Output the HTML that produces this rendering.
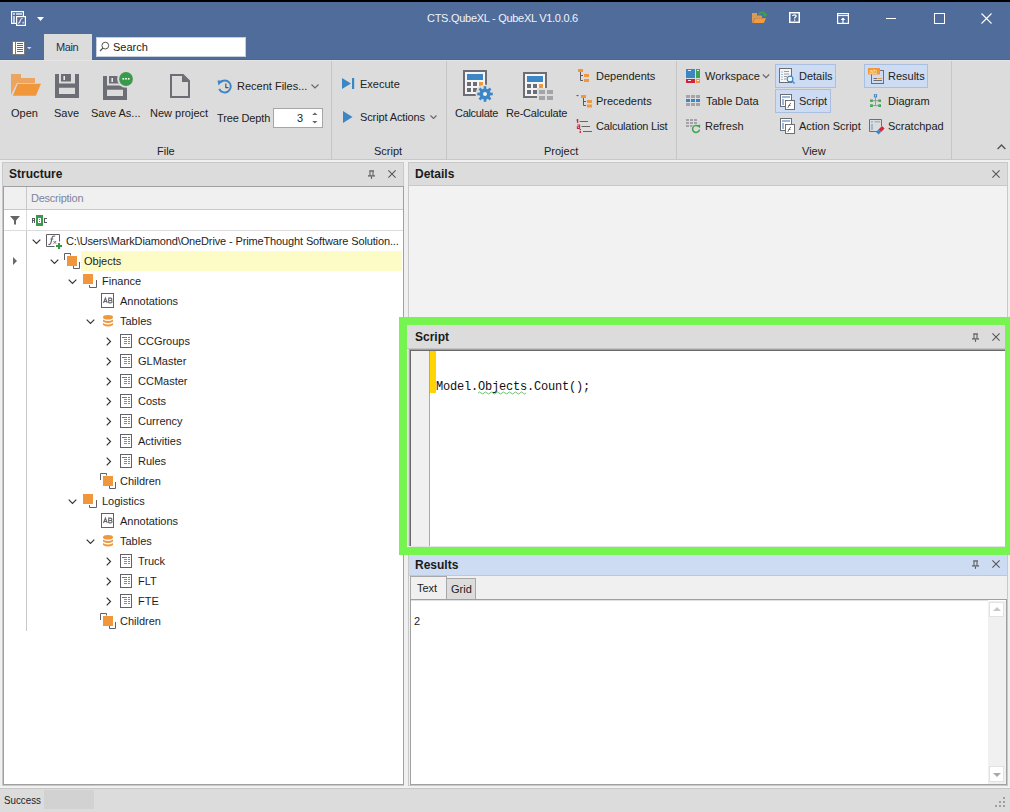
<!DOCTYPE html>
<html><head><meta charset="utf-8"><style>
html,body{margin:0;padding:0;}
body{width:1010px;height:812px;position:relative;overflow:hidden;background:#f0f0f0;font-family:"Liberation Sans",sans-serif;}
body>div{position:absolute;}
.t{white-space:nowrap;}
</style></head><body>
<div style="left:0px;top:0px;width:1010px;height:2px;background:#000"></div>
<div style="left:0px;top:2px;width:1010px;height:58px;background:#4f6c9b"></div>
<div style="left:0px;top:59px;width:1010px;height:1px;background:#49659a"></div>
<svg style="position:absolute;left:11px;top:11px;" width="16" height="16" viewBox="0 0 16 16"><rect x="0.6" y="0.6" width="11.8" height="11.8" fill="#4f6c9b" stroke="#fff" stroke-width="1.2"/><rect x="2" y="2" width="2" height="2" fill="#c0cce0"/><rect x="5" y="2" width="6" height="2" fill="#c0cce0"/><rect x="2" y="5" width="2" height="7" fill="#c0cce0"/><rect x="5.6" y="5.6" width="8.8" height="8.8" fill="#4f6c9b" stroke="#fff" stroke-width="1.2"/><path d="M7.2 12.3 C8.6 12.3 9 10.8 9.4 9.4 C9.8 8 10.3 7.4 11.6 7.5" stroke="#e8ecf4" stroke-width="1.2" fill="none"/><rect x="11.3" y="10.8" width="1.8" height="1.7" fill="#c0cce0"/></svg>
<svg style="position:absolute;left:37px;top:17px;" width="7" height="4" viewBox="0 0 7 4"><path d="M0 0 H7 L3.5 4 Z" fill="#fff"/></svg>
<div class="t" style="left:427px;top:13px;font-size:11px;line-height:11px;font-weight:400;color:#f2f4f8;font-family:'Liberation Sans',sans-serif;letter-spacing:-0.28px">CTS.QubeXL - QubeXL V1.0.0.6</div>
<svg style="position:absolute;left:751px;top:11px;" width="17" height="13" viewBox="0 0 17 13"><path d="M1 2 H6 V4.5 H11 V7 H4 L1.5 12 H1 Z" fill="#d99a55"/><path d="M4.2 7.2 H15 L12.8 12 H2 Z" fill="#f59b3a"/><path d="M8 3.5 C9 1 12.5 0.5 14 3" stroke="#3fa34d" stroke-width="1.8" fill="none"/><path d="M11.5 3 H16.5 L14 6 Z" fill="#3fa34d"/></svg>
<svg style="position:absolute;left:789px;top:12px;" width="11" height="11" viewBox="0 0 11 11"><rect x="0.75" y="0.75" width="9.5" height="9.5" fill="none" stroke="#fff" stroke-width="1.5"/><path d="M3.7 4 C3.7 2.6 7.2 2.6 7.2 4.1 C7.2 5.1 5.5 5.1 5.5 6.6" fill="none" stroke="#fff" stroke-width="1.3"/><rect x="4.9" y="7.4" width="1.3" height="1.3" fill="#fff"/></svg>
<svg style="position:absolute;left:837px;top:13px;" width="12" height="11" viewBox="0 0 12 11"><rect x="0.6" y="0.6" width="10.8" height="9.8" fill="none" stroke="#fff" stroke-width="1.2"/><path d="M1 2.6 H11" stroke="#fff" stroke-width="1"/><path d="M6 10 V5.5" stroke="#fff" stroke-width="1.2"/><path d="M3.6 7 L6 4.4 L8.4 7 Z" fill="#fff"/></svg>
<div style="left:886px;top:18px;width:10px;height:1px;background:#fff"></div>
<svg style="position:absolute;left:934px;top:13px;" width="11" height="11" viewBox="0 0 11 11"><rect x="0.5" y="0.5" width="10" height="10" fill="none" stroke="#fff" stroke-width="1"/></svg>
<svg style="position:absolute;left:981px;top:13px;" width="11" height="11" viewBox="0 0 11 11"><path d="M0.5 0.5 L10.5 10.5 M10.5 0.5 L0.5 10.5" stroke="#fff" stroke-width="1.1"/></svg>
<svg style="position:absolute;left:12px;top:41px;" width="20" height="14" viewBox="0 0 20 14"><rect x="0.5" y="0.5" width="12" height="13" fill="#fff" stroke="#7a7a7a"/><path d="M3.5 0.5 V13.5" stroke="#7a7a7a"/><path d="M5 2.5 H11 M5 4.5 H11 M5 6.5 H11 M5 8.5 H11 M5 10.5 H11" stroke="#666" stroke-width="1"/><path d="M15 6 H19.5 L17.25 8.2 Z" fill="#ddd"/></svg>
<div style="left:44px;top:34px;width:48px;height:26px;background:#dcdcdc"></div>
<div class="t" style="left:56px;top:42px;font-size:11px;line-height:11px;font-weight:400;color:#282e4c;font-family:'Liberation Sans',sans-serif;letter-spacing:-0.4px">Main</div>
<div style="left:96px;top:37px;width:150px;height:20px;background:#fff;border:1px solid #c8cfdc;box-sizing:border-box"></div>
<svg style="position:absolute;left:99px;top:41px;" width="11" height="11" viewBox="0 0 11 11"><circle cx="6.3" cy="4.6" r="3.4" fill="none" stroke="#555" stroke-width="1"/><path d="M4 7 L1 10" stroke="#555" stroke-width="1.3"/></svg>
<div class="t" style="left:113px;top:42px;font-size:11px;line-height:11px;font-weight:400;color:#222;font-family:'Liberation Sans',sans-serif;">Search</div>
<div style="left:0px;top:60px;width:1010px;height:99px;background:#dcdcdc"></div>
<div style="left:0px;top:60px;width:1010px;height:1px;background:#e4e4e4"></div>
<div style="left:0px;top:159px;width:1010px;height:1px;background:#c8c8c8"></div>
<div style="left:331px;top:61px;width:1px;height:98px;background:#c6c6c6"></div>
<div style="left:446px;top:61px;width:1px;height:98px;background:#c6c6c6"></div>
<div style="left:676px;top:61px;width:1px;height:98px;background:#c6c6c6"></div>
<div style="left:951px;top:61px;width:1px;height:98px;background:#c6c6c6"></div>
<svg style="position:absolute;left:11px;top:74px;" width="31" height="22" viewBox="0 0 31 22"><path d="M0 0 H10 V4 H24 V9 H6 L0 21 Z" fill="#eba561"/><path d="M6.7 9.8 H30 L24.9 21.7 H1.9 Z" fill="#f0973b"/></svg>
<svg style="position:absolute;left:55px;top:74px;" width="24" height="24" viewBox="0 0 24 24"><path d="M0 0 H24 V24 H0 Z M4 0 V9.4 H20 V0 Z M4 13.8 V20 H20 V13.8 Z" fill="#6d6e75" fill-rule="evenodd"/><rect x="6" y="0" width="10" height="7.5" fill="#6d6e75"/><rect x="8.4" y="2" width="1.6" height="4" fill="#e8e8e8"/></svg>
<svg style="position:absolute;left:103px;top:71px;" width="31" height="29" viewBox="0 0 31 29"><g transform="translate(0,5)"><path d="M0 0 H24 V24 H0 Z M4 0 V9.4 H20 V0 Z M4 13.8 V20 H20 V13.8 Z" fill="#6d6e75" fill-rule="evenodd"/><rect x="6" y="0" width="10" height="7.5" fill="#6d6e75"/><rect x="8.4" y="2" width="1.6" height="4" fill="#e8e8e8"/></g><circle cx="23" cy="8" r="8.8" fill="#dcdcdc"/><circle cx="23" cy="8" r="6.9" fill="#3a9a4b"/><rect x="19.5" y="7" width="1.6" height="1.6" fill="#fff"/><rect x="22.2" y="7" width="1.6" height="1.6" fill="#fff"/><rect x="24.9" y="7" width="1.6" height="1.6" fill="#fff"/></svg>
<svg style="position:absolute;left:170px;top:74px;" width="20" height="24" viewBox="0 0 20 24"><path d="M1 1 H13 L19 7 V23 H1 Z" fill="none" stroke="#6d6e75" stroke-width="2"/><path d="M12 1 L19 8 H12 Z" fill="#6d6e75"/></svg>
<div class="t" style="left:11px;top:108px;font-size:11px;line-height:11px;font-weight:400;color:#222;font-family:'Liberation Sans',sans-serif;">Open</div>
<div class="t" style="left:54px;top:108px;font-size:11px;line-height:11px;font-weight:400;color:#222;font-family:'Liberation Sans',sans-serif;">Save</div>
<div class="t" style="left:91px;top:108px;font-size:11px;line-height:11px;font-weight:400;color:#222;font-family:'Liberation Sans',sans-serif;">Save As...</div>
<div class="t" style="left:150px;top:108px;font-size:11px;line-height:11px;font-weight:400;color:#222;font-family:'Liberation Sans',sans-serif;">New project</div>
<svg style="position:absolute;left:217px;top:79px;" width="16" height="15" viewBox="0 0 16 15"><path d="M3.2 3.6 A6 6 0 1 1 2.2 9.8" fill="none" stroke="#3d86c6" stroke-width="1.9"/><path d="M0.5 1.5 L5.8 1.5 L1.5 6.5 Z" fill="#3d86c6"/><path d="M8.8 4.5 V8.6 H11.5" fill="none" stroke="#555" stroke-width="1.2"/></svg>
<div class="t" style="left:237px;top:81px;font-size:11px;line-height:11px;font-weight:400;color:#222;font-family:'Liberation Sans',sans-serif;">Recent Files...</div>
<svg style="position:absolute;left:311px;top:84px;" width="8" height="5" viewBox="0 0 8 5"><path d="M0.5 0.5 L4 4 L7.5 0.5" fill="none" stroke="#666" stroke-width="1.1"/></svg>
<div class="t" style="left:217px;top:113px;font-size:11px;line-height:11px;font-weight:400;color:#222;font-family:'Liberation Sans',sans-serif;letter-spacing:-0.15px">Tree Depth</div>
<div style="left:273px;top:108px;width:50px;height:20px;background:#fff;border:1px solid #a6a6a6;box-sizing:border-box"></div>
<div class="t" style="left:297px;top:113px;font-size:11px;line-height:11px;font-weight:400;color:#222;font-family:'Liberation Sans',sans-serif;">3</div>
<svg style="position:absolute;left:312px;top:112px;" width="6" height="12" viewBox="0 0 6 12"><path d="M0.2 3 L2.8 0.6 L5.4 3 Z M0.2 9 L2.8 11.6 L5.4 9 Z" fill="#666"/></svg>
<div class="t" style="left:157px;top:146px;font-size:11px;line-height:11px;font-weight:400;color:#222;font-family:'Liberation Sans',sans-serif;">File</div>
<svg style="position:absolute;left:342px;top:78px;" width="13" height="12" viewBox="0 0 13 12"><path d="M0 0 L9 5.5 L0 11 Z" fill="#3d86c6"/><rect x="10" y="0" width="2.2" height="11" fill="#3d86c6"/></svg>
<div class="t" style="left:360px;top:79px;font-size:11px;line-height:11px;font-weight:400;color:#222;font-family:'Liberation Sans',sans-serif;">Execute</div>
<svg style="position:absolute;left:343px;top:111px;" width="10" height="12" viewBox="0 0 10 12"><path d="M0 0 L9.5 6 L0 12 Z" fill="#3d86c6"/></svg>
<div class="t" style="left:360px;top:112px;font-size:11px;line-height:11px;font-weight:400;color:#222;font-family:'Liberation Sans',sans-serif;letter-spacing:-0.12px">Script Actions</div>
<svg style="position:absolute;left:430px;top:115px;" width="7" height="5" viewBox="0 0 7 5"><path d="M0.5 0.5 L3.5 3.5 L6.5 0.5" fill="none" stroke="#666" stroke-width="1.1"/></svg>
<div class="t" style="left:374px;top:146px;font-size:11px;line-height:11px;font-weight:400;color:#222;font-family:'Liberation Sans',sans-serif;">Script</div>
<svg style="position:absolute;left:463px;top:70px;" width="32" height="34" viewBox="0 0 32 34"><g transform="translate(0,0)"><rect x="1" y="1" width="22" height="24" fill="#f4f4f4" stroke="#6d6e75" stroke-width="2"/><rect x="4" y="4" width="16" height="6" fill="#3d86c6"/><rect x="4" y="12" width="4" height="4" fill="#6d6e75"/><rect x="4" y="18" width="4" height="4" fill="#6d6e75"/><rect x="10" y="12" width="4" height="4" fill="#6d6e75"/><rect x="10" y="18" width="4" height="4" fill="#6d6e75"/><rect x="16" y="12" width="4" height="4" fill="#f0973b"/></g><circle cx="22" cy="24" r="9.5" fill="#dcdcdc"/><g transform="translate(22,24)"><circle r="5.6" fill="#3d86c6"/><rect x="-1.3" y="-7.8" width="2.6" height="3.5" fill="#3d86c6" transform="rotate(0)"/><rect x="-1.3" y="-7.8" width="2.6" height="3.5" fill="#3d86c6" transform="rotate(45)"/><rect x="-1.3" y="-7.8" width="2.6" height="3.5" fill="#3d86c6" transform="rotate(90)"/><rect x="-1.3" y="-7.8" width="2.6" height="3.5" fill="#3d86c6" transform="rotate(135)"/><rect x="-1.3" y="-7.8" width="2.6" height="3.5" fill="#3d86c6" transform="rotate(180)"/><rect x="-1.3" y="-7.8" width="2.6" height="3.5" fill="#3d86c6" transform="rotate(225)"/><rect x="-1.3" y="-7.8" width="2.6" height="3.5" fill="#3d86c6" transform="rotate(270)"/><rect x="-1.3" y="-7.8" width="2.6" height="3.5" fill="#3d86c6" transform="rotate(315)"/><circle r="2" fill="#f2f2f2"/></g></svg>
<div class="t" style="left:455px;top:108px;font-size:11px;line-height:11px;font-weight:400;color:#222;font-family:'Liberation Sans',sans-serif;letter-spacing:-0.3px">Calculate</div>
<svg style="position:absolute;left:523px;top:72px;" width="32" height="30" viewBox="0 0 32 30"><rect x="1" y="1" width="22" height="24" fill="#f4f4f4" stroke="#6d6e75" stroke-width="2"/><rect x="4" y="4" width="16" height="6" fill="#3d86c6"/><rect x="4" y="12" width="4" height="4" fill="#6d6e75"/><rect x="4" y="18" width="4" height="4" fill="#6d6e75"/><rect x="10" y="12" width="4" height="4" fill="#6d6e75"/><rect x="10" y="18" width="4" height="4" fill="#6d6e75"/><rect x="16" y="12" width="4" height="4" fill="#f0973b"/><rect x="14" y="16" width="17" height="14" fill="#dcdcdc"/><rect x="16" y="18" width="6" height="4" fill="#a3a3a8"/><rect x="16" y="24" width="6" height="4" fill="#a3a3a8"/><rect x="24" y="18" width="6" height="4" fill="#a3a3a8"/><rect x="24" y="24" width="6" height="4" fill="#a3a3a8"/></svg>
<div class="t" style="left:506px;top:108px;font-size:11px;line-height:11px;font-weight:400;color:#222;font-family:'Liberation Sans',sans-serif;letter-spacing:-0.2px">Re-Calculate</div>
<svg style="position:absolute;left:577px;top:68px;" width="13" height="15" viewBox="0 0 13 15"><rect x="1" y="1" width="5" height="3" fill="#f0973b"/><path d="M3.5 4 V12.5 H6 M3.5 7.5 H6" stroke="#5a5a60" stroke-width="1" fill="none"/><rect x="7" y="6" width="5" height="3" fill="#f0973b"/><rect x="7" y="11" width="5" height="3" fill="#f0973b"/></svg>
<div class="t" style="left:596px;top:71px;font-size:11px;line-height:11px;font-weight:400;color:#222;font-family:'Liberation Sans',sans-serif;">Dependents</div>
<svg style="position:absolute;left:575px;top:94px;" width="18" height="14" viewBox="0 0 18 14"><path d="M1 1 H4 L2.5 2.5 Z" fill="#5a5a60"/><rect x="6" y="1" width="5" height="3" fill="#f0973b"/><path d="M8.5 4 V11.5 H11 M8.5 7.5 H11" stroke="#5a5a60" stroke-width="1" fill="none"/><rect x="12" y="6" width="5" height="3" fill="#f0973b"/><rect x="12" y="10.5" width="5" height="3" fill="#f0973b"/></svg>
<div class="t" style="left:596px;top:96px;font-size:11px;line-height:11px;font-weight:400;color:#222;font-family:'Liberation Sans',sans-serif;">Precedents</div>
<svg style="position:absolute;left:576px;top:119px;" width="17" height="15" viewBox="0 0 17 15"><path d="M0.6 1.5 L1.6 0.6 V4" stroke="#d0243c" stroke-width="1.3" fill="none"/><path d="M3.5 2.5 H12" stroke="#666" stroke-width="1"/><path d="M1.3 6 H3.6 V9.5 H1.4 V7.8 H3.6" stroke="#d0243c" stroke-width="1.1" fill="none"/><path d="M5.5 7.5 H14" stroke="#666" stroke-width="1"/><path d="M4.3 10 V10.9 M4.3 11.8 V14" stroke="#d0243c" stroke-width="1.3"/><path d="M7 12.5 H16" stroke="#666" stroke-width="1"/></svg>
<div class="t" style="left:596px;top:121px;font-size:11px;line-height:11px;font-weight:400;color:#222;font-family:'Liberation Sans',sans-serif;letter-spacing:-0.2px">Calculation List</div>
<div class="t" style="left:544px;top:146px;font-size:11px;line-height:11px;font-weight:400;color:#222;font-family:'Liberation Sans',sans-serif;">Project</div>
<svg style="position:absolute;left:686px;top:69px;" width="15" height="15" viewBox="0 0 15 15"><rect x="0" y="0" width="9" height="9" fill="#3d86c6"/><rect x="10" y="0" width="4" height="9" fill="#3fa34d"/><rect x="0" y="10" width="9" height="4" fill="#d0243c"/><rect x="10" y="10" width="4" height="4" fill="#f0973b"/><rect x="2" y="1" width="3" height="1" fill="#fff" opacity="0.85"/><rect x="11" y="1" width="2" height="1" fill="#fff" opacity="0.85"/><rect x="2" y="11" width="3" height="1" fill="#fff" opacity="0.85"/><rect x="11" y="11" width="2" height="1" fill="#fff" opacity="0.85"/></svg>
<div class="t" style="left:705px;top:71px;font-size:11px;line-height:11px;font-weight:400;color:#222;font-family:'Liberation Sans',sans-serif;">Workspace</div>
<svg style="position:absolute;left:762px;top:74px;" width="8" height="5" viewBox="0 0 8 5"><path d="M0.8 0.5 L4 3.7 L7.2 0.5" fill="none" stroke="#666" stroke-width="1.1"/></svg>
<svg style="position:absolute;left:686px;top:95px;" width="15" height="12" viewBox="0 0 15 12"><rect x="0" y="0" width="4" height="3" fill="#a3a3a8"/><rect x="0" y="4" width="4" height="3" fill="#3d86c6"/><rect x="0" y="8" width="4" height="3" fill="#a3a3a8"/><rect x="5" y="0" width="4" height="3" fill="#a3a3a8"/><rect x="5" y="4" width="4" height="3" fill="#3d86c6"/><rect x="5" y="8" width="4" height="3" fill="#a3a3a8"/><rect x="10" y="0" width="4" height="3" fill="#a3a3a8"/><rect x="10" y="4" width="4" height="3" fill="#3d86c6"/><rect x="10" y="8" width="4" height="3" fill="#a3a3a8"/></svg>
<div class="t" style="left:706px;top:96px;font-size:11px;line-height:11px;font-weight:400;color:#222;font-family:'Liberation Sans',sans-serif;">Table Data</div>
<svg style="position:absolute;left:686px;top:119px;" width="16" height="16" viewBox="0 0 16 16"><rect x="0" y="0" width="3" height="2" fill="#a3a3a8"/><rect x="0" y="3" width="3" height="2" fill="#a3a3a8"/><rect x="0" y="6" width="3" height="2" fill="#a3a3a8"/><rect x="4" y="0" width="3" height="2" fill="#a3a3a8"/><rect x="4" y="3" width="3" height="2" fill="#a3a3a8"/><rect x="4" y="6" width="3" height="2" fill="#a3a3a8"/><rect x="8" y="0" width="3" height="2" fill="#a3a3a8"/><rect x="8" y="3" width="3" height="2" fill="#a3a3a8"/><rect x="8" y="6" width="3" height="2" fill="#a3a3a8"/><circle cx="10" cy="10" r="4.8" fill="#dcdcdc"/><path d="M13.5 10.6 A3.5 3.5 0 1 1 11.9 7" fill="none" stroke="#3fa34d" stroke-width="1.5"/><path d="M10.6 6.6 L14.2 5.6 L14 9.2 Z" fill="#3fa34d"/></svg>
<div class="t" style="left:705px;top:121px;font-size:11px;line-height:11px;font-weight:400;color:#222;font-family:'Liberation Sans',sans-serif;">Refresh</div>
<div style="left:775px;top:64px;width:61px;height:24px;background:#cddcf2;border:1px solid #a9bfdf;box-sizing:border-box"></div>
<div style="left:775px;top:89px;width:56px;height:24px;background:#cddcf2;border:1px solid #a9bfdf;box-sizing:border-box"></div>
<div style="left:864px;top:64px;width:64px;height:24px;background:#cddcf2;border:1px solid #a9bfdf;box-sizing:border-box"></div>
<svg style="position:absolute;left:779px;top:68px;" width="17" height="17" viewBox="0 0 17 17"><rect x="0.5" y="0.5" width="12" height="14" fill="#f6f6f6" stroke="#6d6e75"/><path d="M3 3.5 V4.5 M3 6 V7 M3 8.5 V9.5 M3 11 V12" stroke="#3d86c6" stroke-width="1"/><path d="M5 3.5 H10 M5 6 H10 M5 8.5 H8 M5 11 H7" stroke="#9a9aa0" stroke-width="1"/><circle cx="11" cy="11" r="2.9" fill="#f6f6f6" stroke="#3d86c6" stroke-width="1.2"/><path d="M13 13 L15.5 15.5" stroke="#3d86c6" stroke-width="1.4"/></svg>
<div class="t" style="left:799px;top:71px;font-size:11px;line-height:11px;font-weight:400;color:#222;font-family:'Liberation Sans',sans-serif;">Details</div>
<svg style="position:absolute;left:780px;top:94px;" width="16" height="17" viewBox="0 0 16 17"><rect x="0.5" y="0.5" width="11" height="12" fill="#fff" stroke="#6d6e75"/><rect x="2" y="2" width="8" height="2" fill="#9ab8dc"/><rect x="2" y="5" width="2" height="6" fill="#9ab8dc"/><rect x="5.5" y="6.5" width="9" height="9" fill="#fff" stroke="#6d6e75"/><path d="M7.5 14 C8.5 14 9.5 9 11 9 M8.5 11.5 H10.5" stroke="#6d6e75" stroke-width="1" fill="none"/></svg>
<div class="t" style="left:799px;top:96px;font-size:11px;line-height:11px;font-weight:400;color:#222;font-family:'Liberation Sans',sans-serif;">Script</div>
<svg style="position:absolute;left:780px;top:118px;" width="16" height="17" viewBox="0 0 16 17"><rect x="0.5" y="0.5" width="11" height="12" fill="#fff" stroke="#6d6e75"/><rect x="2" y="2" width="8" height="2" fill="#9ab8dc"/><rect x="2" y="5" width="2" height="6" fill="#9ab8dc"/><rect x="5.5" y="6.5" width="9" height="9" fill="#fff" stroke="#6d6e75"/><path d="M7.5 14 C8.5 14 9.5 9 11 9 M8.5 11.5 H10.5" stroke="#6d6e75" stroke-width="1" fill="none"/></svg>
<div class="t" style="left:799px;top:121px;font-size:11px;line-height:11px;font-weight:400;color:#222;font-family:'Liberation Sans',sans-serif;">Action Script</div>
<svg style="position:absolute;left:868px;top:68px;" width="17" height="17" viewBox="0 0 17 17"><rect x="3.5" y="2.5" width="12" height="13" fill="none" stroke="#6d6e75"/><path d="M5.5 10.5 H9" stroke="#6d6e75"/><path d="M9.5 10.5 H14" stroke="#f0973b"/><path d="M5.5 12.5 H14" stroke="#6d6e75"/><rect x="0" y="0" width="12" height="6.5" fill="#f0973b"/><text x="1.3" y="5.6" font-size="7" fill="#fbe3c8" font-family="Liberation Sans">ab</text></svg>
<div class="t" style="left:888px;top:71px;font-size:11px;line-height:11px;font-weight:400;color:#222;font-family:'Liberation Sans',sans-serif;">Results</div>
<svg style="position:absolute;left:869px;top:93px;" width="14" height="15" viewBox="0 0 14 15"><rect x="5.4" y="1.7" width="2.2" height="2.2" fill="none" stroke="#3d86c6"/><path d="M6.5 4 V13 M3.3 7.7 H9.8 M3.3 12.6 H9.8" stroke="#9a9a9a" stroke-width="1"/><rect x="1.6" y="7" width="1.7" height="1.4" fill="none" stroke="#3fa34d"/><rect x="9.8" y="7" width="1.7" height="1.4" fill="none" stroke="#3fa34d"/><rect x="1.6" y="11.8" width="1.7" height="1.7" fill="none" stroke="#3fa34d"/><rect x="9.8" y="11.8" width="1.7" height="1.7" fill="none" stroke="#3fa34d"/></svg>
<div class="t" style="left:888px;top:96px;font-size:11px;line-height:11px;font-weight:400;color:#222;font-family:'Liberation Sans',sans-serif;">Diagram</div>
<svg style="position:absolute;left:869px;top:119px;" width="16" height="16" viewBox="0 0 16 16"><path d="M8 12.5 H0.5 V0.5 H12.5 V7" fill="none" stroke="#6d6e75"/><rect x="2" y="2" width="2" height="1.5" fill="#9ab8dc"/><rect x="5.5" y="2" width="5.5" height="1.5" fill="#9ab8dc"/><rect x="2" y="5" width="2" height="6" fill="#9ab8dc"/><path d="M13.03 7.03 L15.57 9.57 L12.07 13.07 L9.53 10.53 Z" fill="#d0243c"/><path d="M9.53 10.53 L12.07 13.07 L9.57 15.57 L7.03 13.03 Z" fill="#3d86c6"/></svg>
<div class="t" style="left:888px;top:121px;font-size:11px;line-height:11px;font-weight:400;color:#222;font-family:'Liberation Sans',sans-serif;">Scratchpad</div>
<div class="t" style="left:802px;top:146px;font-size:11px;line-height:11px;font-weight:400;color:#222;font-family:'Liberation Sans',sans-serif;">View</div>
<svg style="position:absolute;left:997px;top:144px;" width="9" height="6" viewBox="0 0 9 6"><path d="M0.6 5 L4.5 1.1 L8.4 5" fill="none" stroke="#555" stroke-width="1.4"/></svg>
<div style="left:0px;top:160px;width:1010px;height:628px;background:#f0f0f0"></div>
<div style="left:2px;top:162px;width:402px;height:624px;background:#dcdcdc;border:1px solid #c8c8c8;box-sizing:border-box"></div>
<div class="t" style="left:9px;top:168px;font-size:12px;line-height:12px;font-weight:700;color:#1a1a1a;font-family:'Liberation Sans',sans-serif;">Structure</div>
<svg style="position:absolute;left:368px;top:170px;" width="7" height="10" viewBox="0 0 7 10"><path d="M1.2 1 H6" stroke="#555" stroke-width="1.3"/><path d="M2 1.5 V5.5 M5 1.5 V5.5" stroke="#555" stroke-width="1"/><path d="M0 5.9 H7" stroke="#555" stroke-width="1.2"/><path d="M3.5 6.5 V8.8" stroke="#555" stroke-width="1.1"/></svg>
<svg style="position:absolute;left:388px;top:170px;" width="8" height="8" viewBox="0 0 8 8"><path d="M0.4 0.4 L7.6 7.6 M7.6 0.4 L0.4 7.6" stroke="#555" stroke-width="1.05"/></svg>
<div style="left:3px;top:186px;width:401px;height:599px;background:#fff;border:1px solid #a0a0a0;box-sizing:border-box"></div>
<div style="left:4px;top:187px;width:399px;height:22px;background:#f0f0f0"></div>
<div style="left:4px;top:209px;width:399px;height:1px;background:#c8c8c8"></div>
<div style="left:26px;top:187px;width:1px;height:22px;background:#c8c8c8"></div>
<div style="left:26px;top:210px;width:1px;height:20px;background:#dcdcdc"></div>
<div style="left:4px;top:230px;width:399px;height:1px;background:#dcdcdc"></div>
<div class="t" style="left:31px;top:193px;font-size:11px;line-height:11px;font-weight:400;color:#80849a;font-family:'Liberation Sans',sans-serif;letter-spacing:-0.25px">Description</div>
<svg style="position:absolute;left:10px;top:216px;" width="10" height="9" viewBox="0 0 10 9"><path d="M0 0 H10 L6 4.5 V8.5 H4 V4.5 Z" fill="#666"/></svg>
<svg style="position:absolute;left:31px;top:214px;" width="18" height="13" viewBox="0 0 18 13"><g shape-rendering="crispEdges"><rect x="1" y="4" width="3" height="1" fill="#5a5a64"/><rect x="1" y="4" width="1" height="5" fill="#5a5a64"/><rect x="3" y="4" width="1" height="5" fill="#5a5a64"/><rect x="1" y="6" width="3" height="1" fill="#5a5a64"/><rect x="5" y="1" width="7" height="11" fill="#3a9a4b"/><rect x="7" y="4" width="3" height="5" fill="#fff"/><rect x="8" y="5" width="1" height="1" fill="#3a9a4b"/><rect x="8" y="7" width="1" height="1" fill="#3a9a4b"/><rect x="13" y="4" width="3" height="1" fill="#5a5a64"/><rect x="13" y="4" width="1" height="5" fill="#5a5a64"/><rect x="13" y="8" width="3" height="1" fill="#5a5a64"/></g></svg>
<div style="left:26px;top:231px;width:1px;height:400px;background:#c8c8c8"></div>
<svg style="position:absolute;left:32px;top:239px;" width="9" height="6" viewBox="0 0 9 6"><path d="M0.7 0.7 L4.5 4.5 L8.3 0.7" fill="none" stroke="#333" stroke-width="1.2"/></svg>
<svg style="position:absolute;left:46px;top:234px;" width="17" height="16" viewBox="0 0 17 16"><path d="M8.5 12.5 H0.5 V0.5 H13.5 V7.5" stroke="#606068" fill="none"/><path d="M2.4 10.3 C3.5 11 4.6 10.4 5.1 8.2 L6 4 C6.4 2.3 7.5 1.7 9.2 2.2" stroke="#606068" stroke-width="1.15" fill="none"/><path d="M4.3 5 H7.3" stroke="#606068" stroke-width="0.9"/><path d="M7.5 7 L10.2 9.8 M10.2 7 L7.5 9.8" stroke="#606068" stroke-width="0.9"/><path d="M13 9 V15 M10 12 H16" stroke="#2f9a3e" stroke-width="2"/></svg>
<div class="t" style="left:66px;top:236px;font-size:11px;line-height:11px;font-weight:400;color:#1e1e1e;font-family:'Liberation Sans',sans-serif;letter-spacing:-0.13px">C:\Users\MarkDiamond\OneDrive - PrimeThought Software Solution...</div>
<div style="left:81px;top:251px;width:321px;height:20px;background:#fdfbc6"></div>
<svg style="position:absolute;left:13px;top:257px;" width="5" height="8" viewBox="0 0 5 8"><path d="M0 0 L4 4 L0 8 Z" fill="#6a6a6a"/></svg>
<svg style="position:absolute;left:50px;top:259px;" width="9" height="6" viewBox="0 0 9 6"><path d="M0.7 0.7 L4.5 4.5 L8.3 0.7" fill="none" stroke="#333" stroke-width="1.2"/></svg>
<svg style="position:absolute;left:64px;top:253px;" width="17" height="17" viewBox="0 0 17 17"><path d="M0.5 7 V0.5 H6.5 V2.5" fill="none" stroke="#5f6068"/><rect x="3" y="3" width="10" height="10" fill="#f0973b"/><path d="M9.5 13 V15.5 H15.5 V9" fill="none" stroke="#5f6068"/></svg>
<div class="t" style="left:84px;top:256px;font-size:11px;line-height:11px;font-weight:400;color:#1e1e1e;font-family:'Liberation Sans',sans-serif;">Objects</div>
<svg style="position:absolute;left:68px;top:279px;" width="9" height="6" viewBox="0 0 9 6"><path d="M0.7 0.7 L4.5 4.5 L8.3 0.7" fill="none" stroke="#333" stroke-width="1.2"/></svg>
<svg style="position:absolute;left:82px;top:273px;" width="17" height="17" viewBox="0 0 17 17"><rect x="1" y="1" width="10" height="10" fill="#f0973b"/><path d="M7.5 12 V14.5 H14.5 V7" fill="none" stroke="#5f6068"/></svg>
<div class="t" style="left:102px;top:276px;font-size:11px;line-height:11px;font-weight:400;color:#1e1e1e;font-family:'Liberation Sans',sans-serif;">Finance</div>
<svg style="position:absolute;left:101px;top:293px;" width="14" height="16" viewBox="0 0 14 16"><rect x="0.5" y="0.5" width="12" height="14" fill="#fff" stroke="#606068"/><path d="M2.5 10 L4.4 5 L6.3 10 M3.2 8.5 H5.6" stroke="#66666c" stroke-width="1.1" fill="none"/><path d="M7.7 10 V5.1 H9.6 Q10.9 5.1 10.9 6.3 Q10.9 7.5 9.6 7.5 H7.7 M9.6 7.5 Q11.1 7.5 11.1 8.7 Q11.1 9.9 9.6 9.9 H7.7" stroke="#66666c" stroke-width="1.1" fill="none"/></svg>
<div class="t" style="left:120px;top:296px;font-size:11px;line-height:11px;font-weight:400;color:#1e1e1e;font-family:'Liberation Sans',sans-serif;">Annotations</div>
<svg style="position:absolute;left:86px;top:319px;" width="9" height="6" viewBox="0 0 9 6"><path d="M0.7 0.7 L4.5 4.5 L8.3 0.7" fill="none" stroke="#333" stroke-width="1.2"/></svg>
<svg style="position:absolute;left:103px;top:315px;" width="10" height="13" viewBox="0 0 10 13"><ellipse cx="5" cy="2.3" rx="5" ry="2.3" fill="#f0973b"/><path d="M0 4.6 Q5 7.6 10 4.6 V6.6 Q5 9.6 0 6.6Z M0 8.1 Q5 11.1 10 8.1 V10 Q5 13 0 10Z" fill="#f0973b"/></svg>
<div class="t" style="left:120px;top:316px;font-size:11px;line-height:11px;font-weight:400;color:#1e1e1e;font-family:'Liberation Sans',sans-serif;">Tables</div>
<svg style="position:absolute;left:106px;top:337px;" width="6" height="9" viewBox="0 0 6 9"><path d="M0.7 0.7 L4.5 4.5 L0.7 8.3" fill="none" stroke="#333" stroke-width="1.2"/></svg>
<svg style="position:absolute;left:120px;top:334px;" width="13" height="15" viewBox="0 0 13 15"><rect x="0.5" y="0.5" width="11" height="13" fill="#fff" stroke="#5f6068"/><path d="M2 3.5 H7 M8 3.5 H10" stroke="#3d86c6"/><path d="M4 5.5 H7 M8 5.5 H10 M4 7.5 H7 M8 7.5 H10 M4 9.5 H7 M8 9.5 H10" stroke="#8a8a90"/></svg>
<div class="t" style="left:138px;top:336px;font-size:11px;line-height:11px;font-weight:400;color:#1e1e1e;font-family:'Liberation Sans',sans-serif;">CCGroups</div>
<svg style="position:absolute;left:106px;top:357px;" width="6" height="9" viewBox="0 0 6 9"><path d="M0.7 0.7 L4.5 4.5 L0.7 8.3" fill="none" stroke="#333" stroke-width="1.2"/></svg>
<svg style="position:absolute;left:120px;top:354px;" width="13" height="15" viewBox="0 0 13 15"><rect x="0.5" y="0.5" width="11" height="13" fill="#fff" stroke="#5f6068"/><path d="M2 3.5 H7 M8 3.5 H10" stroke="#3d86c6"/><path d="M4 5.5 H7 M8 5.5 H10 M4 7.5 H7 M8 7.5 H10 M4 9.5 H7 M8 9.5 H10" stroke="#8a8a90"/></svg>
<div class="t" style="left:138px;top:356px;font-size:11px;line-height:11px;font-weight:400;color:#1e1e1e;font-family:'Liberation Sans',sans-serif;">GLMaster</div>
<svg style="position:absolute;left:106px;top:377px;" width="6" height="9" viewBox="0 0 6 9"><path d="M0.7 0.7 L4.5 4.5 L0.7 8.3" fill="none" stroke="#333" stroke-width="1.2"/></svg>
<svg style="position:absolute;left:120px;top:374px;" width="13" height="15" viewBox="0 0 13 15"><rect x="0.5" y="0.5" width="11" height="13" fill="#fff" stroke="#5f6068"/><path d="M2 3.5 H7 M8 3.5 H10" stroke="#3d86c6"/><path d="M4 5.5 H7 M8 5.5 H10 M4 7.5 H7 M8 7.5 H10 M4 9.5 H7 M8 9.5 H10" stroke="#8a8a90"/></svg>
<div class="t" style="left:138px;top:376px;font-size:11px;line-height:11px;font-weight:400;color:#1e1e1e;font-family:'Liberation Sans',sans-serif;">CCMaster</div>
<svg style="position:absolute;left:106px;top:397px;" width="6" height="9" viewBox="0 0 6 9"><path d="M0.7 0.7 L4.5 4.5 L0.7 8.3" fill="none" stroke="#333" stroke-width="1.2"/></svg>
<svg style="position:absolute;left:120px;top:394px;" width="13" height="15" viewBox="0 0 13 15"><rect x="0.5" y="0.5" width="11" height="13" fill="#fff" stroke="#5f6068"/><path d="M2 3.5 H7 M8 3.5 H10" stroke="#3d86c6"/><path d="M4 5.5 H7 M8 5.5 H10 M4 7.5 H7 M8 7.5 H10 M4 9.5 H7 M8 9.5 H10" stroke="#8a8a90"/></svg>
<div class="t" style="left:138px;top:396px;font-size:11px;line-height:11px;font-weight:400;color:#1e1e1e;font-family:'Liberation Sans',sans-serif;">Costs</div>
<svg style="position:absolute;left:106px;top:417px;" width="6" height="9" viewBox="0 0 6 9"><path d="M0.7 0.7 L4.5 4.5 L0.7 8.3" fill="none" stroke="#333" stroke-width="1.2"/></svg>
<svg style="position:absolute;left:120px;top:414px;" width="13" height="15" viewBox="0 0 13 15"><rect x="0.5" y="0.5" width="11" height="13" fill="#fff" stroke="#5f6068"/><path d="M2 3.5 H7 M8 3.5 H10" stroke="#3d86c6"/><path d="M4 5.5 H7 M8 5.5 H10 M4 7.5 H7 M8 7.5 H10 M4 9.5 H7 M8 9.5 H10" stroke="#8a8a90"/></svg>
<div class="t" style="left:138px;top:416px;font-size:11px;line-height:11px;font-weight:400;color:#1e1e1e;font-family:'Liberation Sans',sans-serif;">Currency</div>
<svg style="position:absolute;left:106px;top:437px;" width="6" height="9" viewBox="0 0 6 9"><path d="M0.7 0.7 L4.5 4.5 L0.7 8.3" fill="none" stroke="#333" stroke-width="1.2"/></svg>
<svg style="position:absolute;left:120px;top:434px;" width="13" height="15" viewBox="0 0 13 15"><rect x="0.5" y="0.5" width="11" height="13" fill="#fff" stroke="#5f6068"/><path d="M2 3.5 H7 M8 3.5 H10" stroke="#3d86c6"/><path d="M4 5.5 H7 M8 5.5 H10 M4 7.5 H7 M8 7.5 H10 M4 9.5 H7 M8 9.5 H10" stroke="#8a8a90"/></svg>
<div class="t" style="left:138px;top:436px;font-size:11px;line-height:11px;font-weight:400;color:#1e1e1e;font-family:'Liberation Sans',sans-serif;">Activities</div>
<svg style="position:absolute;left:106px;top:457px;" width="6" height="9" viewBox="0 0 6 9"><path d="M0.7 0.7 L4.5 4.5 L0.7 8.3" fill="none" stroke="#333" stroke-width="1.2"/></svg>
<svg style="position:absolute;left:120px;top:454px;" width="13" height="15" viewBox="0 0 13 15"><rect x="0.5" y="0.5" width="11" height="13" fill="#fff" stroke="#5f6068"/><path d="M2 3.5 H7 M8 3.5 H10" stroke="#3d86c6"/><path d="M4 5.5 H7 M8 5.5 H10 M4 7.5 H7 M8 7.5 H10 M4 9.5 H7 M8 9.5 H10" stroke="#8a8a90"/></svg>
<div class="t" style="left:138px;top:456px;font-size:11px;line-height:11px;font-weight:400;color:#1e1e1e;font-family:'Liberation Sans',sans-serif;">Rules</div>
<svg style="position:absolute;left:100px;top:473px;" width="17" height="17" viewBox="0 0 17 17"><path d="M0.5 7 V0.5 H6.5 V2.5" fill="none" stroke="#5f6068"/><rect x="3" y="3" width="10" height="10" fill="#f0973b"/><path d="M9.5 13 V15.5 H15.5 V9" fill="none" stroke="#5f6068"/></svg>
<div class="t" style="left:120px;top:476px;font-size:11px;line-height:11px;font-weight:400;color:#1e1e1e;font-family:'Liberation Sans',sans-serif;">Children</div>
<svg style="position:absolute;left:68px;top:499px;" width="9" height="6" viewBox="0 0 9 6"><path d="M0.7 0.7 L4.5 4.5 L8.3 0.7" fill="none" stroke="#333" stroke-width="1.2"/></svg>
<svg style="position:absolute;left:82px;top:493px;" width="17" height="17" viewBox="0 0 17 17"><rect x="1" y="1" width="10" height="10" fill="#f0973b"/><path d="M7.5 12 V14.5 H14.5 V7" fill="none" stroke="#5f6068"/></svg>
<div class="t" style="left:102px;top:496px;font-size:11px;line-height:11px;font-weight:400;color:#1e1e1e;font-family:'Liberation Sans',sans-serif;">Logistics</div>
<svg style="position:absolute;left:101px;top:513px;" width="14" height="16" viewBox="0 0 14 16"><rect x="0.5" y="0.5" width="12" height="14" fill="#fff" stroke="#606068"/><path d="M2.5 10 L4.4 5 L6.3 10 M3.2 8.5 H5.6" stroke="#66666c" stroke-width="1.1" fill="none"/><path d="M7.7 10 V5.1 H9.6 Q10.9 5.1 10.9 6.3 Q10.9 7.5 9.6 7.5 H7.7 M9.6 7.5 Q11.1 7.5 11.1 8.7 Q11.1 9.9 9.6 9.9 H7.7" stroke="#66666c" stroke-width="1.1" fill="none"/></svg>
<div class="t" style="left:120px;top:516px;font-size:11px;line-height:11px;font-weight:400;color:#1e1e1e;font-family:'Liberation Sans',sans-serif;">Annotations</div>
<svg style="position:absolute;left:86px;top:539px;" width="9" height="6" viewBox="0 0 9 6"><path d="M0.7 0.7 L4.5 4.5 L8.3 0.7" fill="none" stroke="#333" stroke-width="1.2"/></svg>
<svg style="position:absolute;left:103px;top:535px;" width="10" height="13" viewBox="0 0 10 13"><ellipse cx="5" cy="2.3" rx="5" ry="2.3" fill="#f0973b"/><path d="M0 4.6 Q5 7.6 10 4.6 V6.6 Q5 9.6 0 6.6Z M0 8.1 Q5 11.1 10 8.1 V10 Q5 13 0 10Z" fill="#f0973b"/></svg>
<div class="t" style="left:120px;top:536px;font-size:11px;line-height:11px;font-weight:400;color:#1e1e1e;font-family:'Liberation Sans',sans-serif;">Tables</div>
<svg style="position:absolute;left:106px;top:557px;" width="6" height="9" viewBox="0 0 6 9"><path d="M0.7 0.7 L4.5 4.5 L0.7 8.3" fill="none" stroke="#333" stroke-width="1.2"/></svg>
<svg style="position:absolute;left:120px;top:554px;" width="13" height="15" viewBox="0 0 13 15"><rect x="0.5" y="0.5" width="11" height="13" fill="#fff" stroke="#5f6068"/><path d="M2 3.5 H7 M8 3.5 H10" stroke="#3d86c6"/><path d="M4 5.5 H7 M8 5.5 H10 M4 7.5 H7 M8 7.5 H10 M4 9.5 H7 M8 9.5 H10" stroke="#8a8a90"/></svg>
<div class="t" style="left:138px;top:556px;font-size:11px;line-height:11px;font-weight:400;color:#1e1e1e;font-family:'Liberation Sans',sans-serif;">Truck</div>
<svg style="position:absolute;left:106px;top:577px;" width="6" height="9" viewBox="0 0 6 9"><path d="M0.7 0.7 L4.5 4.5 L0.7 8.3" fill="none" stroke="#333" stroke-width="1.2"/></svg>
<svg style="position:absolute;left:120px;top:574px;" width="13" height="15" viewBox="0 0 13 15"><rect x="0.5" y="0.5" width="11" height="13" fill="#fff" stroke="#5f6068"/><path d="M2 3.5 H7 M8 3.5 H10" stroke="#3d86c6"/><path d="M4 5.5 H7 M8 5.5 H10 M4 7.5 H7 M8 7.5 H10 M4 9.5 H7 M8 9.5 H10" stroke="#8a8a90"/></svg>
<div class="t" style="left:138px;top:576px;font-size:11px;line-height:11px;font-weight:400;color:#1e1e1e;font-family:'Liberation Sans',sans-serif;">FLT</div>
<svg style="position:absolute;left:106px;top:597px;" width="6" height="9" viewBox="0 0 6 9"><path d="M0.7 0.7 L4.5 4.5 L0.7 8.3" fill="none" stroke="#333" stroke-width="1.2"/></svg>
<svg style="position:absolute;left:120px;top:594px;" width="13" height="15" viewBox="0 0 13 15"><rect x="0.5" y="0.5" width="11" height="13" fill="#fff" stroke="#5f6068"/><path d="M2 3.5 H7 M8 3.5 H10" stroke="#3d86c6"/><path d="M4 5.5 H7 M8 5.5 H10 M4 7.5 H7 M8 7.5 H10 M4 9.5 H7 M8 9.5 H10" stroke="#8a8a90"/></svg>
<div class="t" style="left:138px;top:596px;font-size:11px;line-height:11px;font-weight:400;color:#1e1e1e;font-family:'Liberation Sans',sans-serif;">FTE</div>
<svg style="position:absolute;left:100px;top:613px;" width="17" height="17" viewBox="0 0 17 17"><path d="M0.5 7 V0.5 H6.5 V2.5" fill="none" stroke="#5f6068"/><rect x="3" y="3" width="10" height="10" fill="#f0973b"/><path d="M9.5 13 V15.5 H15.5 V9" fill="none" stroke="#5f6068"/></svg>
<div class="t" style="left:120px;top:616px;font-size:11px;line-height:11px;font-weight:400;color:#1e1e1e;font-family:'Liberation Sans',sans-serif;">Children</div>
<div style="left:408px;top:162px;width:600px;height:155px;background:#f2f2f2;border:1px solid #c8c8c8;border-bottom:none;box-sizing:border-box"></div>
<div style="left:409px;top:163px;width:598px;height:22px;background:#dcdcdc"></div>
<div style="left:409px;top:185px;width:598px;height:1px;background:#c8c8c8"></div>
<div class="t" style="left:415px;top:168px;font-size:12px;line-height:12px;font-weight:700;color:#1a1a1a;font-family:'Liberation Sans',sans-serif;">Details</div>
<svg style="position:absolute;left:992px;top:170px;" width="8" height="8" viewBox="0 0 8 8"><path d="M0.4 0.4 L7.6 7.6 M7.6 0.4 L0.4 7.6" stroke="#555" stroke-width="1.05"/></svg>
<div style="left:399px;top:317px;width:611px;height:238px;background:#76f550"></div>
<div style="left:407px;top:325px;width:598px;height:222px;background:#f0f0f0"></div>
<div style="left:407px;top:325px;width:598px;height:23px;background:#dcdcdc"></div>
<div style="left:407px;top:348px;width:598px;height:1px;background:#c4c4c4"></div>
<div style="left:408px;top:349px;width:597px;height:1px;background:#a0a0a0"></div>
<div style="left:408px;top:349px;width:1px;height:197px;background:#d8d8d8"></div>
<div style="left:409px;top:349px;width:1px;height:197px;background:#a0a0a0"></div>
<div class="t" style="left:415px;top:331px;font-size:12px;line-height:12px;font-weight:700;color:#1a1a1a;font-family:'Liberation Sans',sans-serif;">Script</div>
<svg style="position:absolute;left:972px;top:333px;" width="7" height="10" viewBox="0 0 7 10"><path d="M1.2 1 H6" stroke="#555" stroke-width="1.3"/><path d="M2 1.5 V5.5 M5 1.5 V5.5" stroke="#555" stroke-width="1"/><path d="M0 5.9 H7" stroke="#555" stroke-width="1.2"/><path d="M3.5 6.5 V8.8" stroke="#555" stroke-width="1.1"/></svg>
<svg style="position:absolute;left:992px;top:333px;" width="8" height="8" viewBox="0 0 8 8"><path d="M0.4 0.4 L7.6 7.6 M7.6 0.4 L0.4 7.6" stroke="#555" stroke-width="1.05"/></svg>
<div style="left:410px;top:350px;width:595px;height:196px;background:#fff;border-left:1px solid #6a6a6a;border-top:1px solid #6a6a6a;box-sizing:border-box"></div>
<div style="left:411px;top:351px;width:18px;height:195px;background:#f0f0f0"></div>
<div style="left:429px;top:351px;width:1px;height:195px;background:#a8a8a8"></div>
<div style="left:430px;top:351px;width:6px;height:42px;background:#ffd400"></div>
<div class="t" style="left:436px;top:381px;font-size:12px;line-height:12px;font-weight:400;color:#111;font-family:'Liberation Mono',sans-serif;letter-spacing:-0.2px">Model.Objects.Count();</div>
<svg style="position:absolute;left:478px;top:391px;" width="50" height="4" viewBox="0 0 50 4"><path d="M0 2 Q1.5 0 3 2 T6 2 T9 2 T12 2 T15 2 T18 2 T21 2 T24 2 T27 2 T30 2 T33 2 T36 2 T39 2 T42 2 T45 2 T48 2" fill="none" stroke="#4caf50" stroke-width="0.8"/></svg>
<div style="left:410px;top:546px;width:595px;height:1px;background:#e4e4e4"></div>
<div style="left:408px;top:555px;width:600px;height:231px;background:#f0f0f0;border:1px solid #c8c8c8;border-top:none;box-sizing:border-box"></div>
<div style="left:409px;top:555px;width:598px;height:20px;background:#cddcf2"></div>
<div style="left:409px;top:575px;width:598px;height:1px;background:#c0c8d4"></div>
<div class="t" style="left:415px;top:559px;font-size:12px;line-height:12px;font-weight:700;color:#1a1a1a;font-family:'Liberation Sans',sans-serif;">Results</div>
<svg style="position:absolute;left:972px;top:560px;" width="7" height="10" viewBox="0 0 7 10"><path d="M1.2 1 H6" stroke="#555" stroke-width="1.3"/><path d="M2 1.5 V5.5 M5 1.5 V5.5" stroke="#555" stroke-width="1"/><path d="M0 5.9 H7" stroke="#555" stroke-width="1.2"/><path d="M3.5 6.5 V8.8" stroke="#555" stroke-width="1.1"/></svg>
<svg style="position:absolute;left:992px;top:560px;" width="8" height="8" viewBox="0 0 8 8"><path d="M0.4 0.4 L7.6 7.6 M7.6 0.4 L0.4 7.6" stroke="#555" stroke-width="1.05"/></svg>
<div style="left:446px;top:578px;width:30px;height:21px;background:#dcdcdc;border:1px solid #a8a8a8;border-bottom:none;box-sizing:border-box"></div>
<div style="left:410px;top:576px;width:37px;height:24px;background:#f0f0f0;border:1px solid #a8a8a8;border-bottom:none;box-sizing:border-box"></div>
<div style="left:410px;top:599px;width:597px;height:186px;background:#fff;border:1px solid #a0a0a0;box-sizing:border-box"></div>
<div style="left:411px;top:600px;width:577px;height:1px;background:#e0e0e0"></div>
<div class="t" style="left:417px;top:583px;font-size:11px;line-height:11px;font-weight:400;color:#222;font-family:'Liberation Sans',sans-serif;">Text</div>
<div class="t" style="left:451px;top:584px;font-size:11px;line-height:11px;font-weight:400;color:#222;font-family:'Liberation Sans',sans-serif;">Grid</div>
<div class="t" style="left:414px;top:616px;font-size:11px;line-height:11px;font-weight:400;color:#222;font-family:'Liberation Sans',sans-serif;">2</div>
<div style="left:988px;top:601px;width:18px;height:183px;background:#f0f0f0"></div>
<div style="left:989px;top:602px;width:15px;height:15px;background:#fff;border:1px solid #e2e2e2;box-sizing:border-box"></div>
<svg style="position:absolute;left:993px;top:607px;" width="8" height="4" viewBox="0 0 8 4"><path d="M0 4 L4 0 L8 4Z" fill="#c8c8c8"/></svg>
<div style="left:989px;top:766px;width:15px;height:16px;background:#fff;border:1px solid #e2e2e2;box-sizing:border-box"></div>
<svg style="position:absolute;left:993px;top:773px;" width="8" height="4" viewBox="0 0 8 4"><path d="M0 0 L4 4 L8 0Z" fill="#a8a8a8"/></svg>
<div style="left:0px;top:786px;width:1010px;height:2px;background:#f2f2f2"></div>
<div style="left:0px;top:788px;width:1010px;height:1px;background:#c6c6c6"></div>
<div style="left:0px;top:789px;width:1010px;height:23px;background:#dcdcdc"></div>
<div class="t" style="left:4px;top:795px;font-size:11px;line-height:11px;font-weight:400;color:#1e1e1e;font-family:'Liberation Sans',sans-serif;transform:scaleX(0.89);transform-origin:0 0">Success</div>
<div style="left:44px;top:790px;width:50px;height:19px;background:#d2d2d2"></div>
<div style="left:1003px;top:797px;width:2px;height:2px;background:#a0a0a0"></div>
<div style="left:999px;top:801px;width:2px;height:2px;background:#a0a0a0"></div>
<div style="left:1003px;top:801px;width:2px;height:2px;background:#a0a0a0"></div>
<div style="left:995px;top:805px;width:2px;height:2px;background:#a0a0a0"></div>
<div style="left:999px;top:805px;width:2px;height:2px;background:#a0a0a0"></div>
<div style="left:1003px;top:805px;width:2px;height:2px;background:#a0a0a0"></div>
</body></html>
